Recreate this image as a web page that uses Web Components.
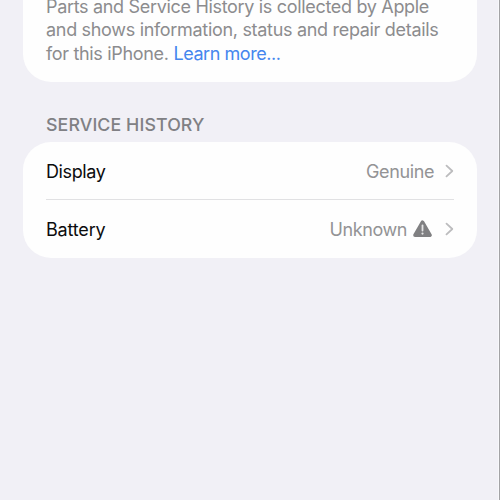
<!DOCTYPE html>
<html lang="en">
<head>
<meta charset="utf-8">
<title>Parts and Service History</title>
<style>
html, body { margin: 0; height: 100%; overflow: hidden; }
body { font-family: Inter, "Liberation Sans", sans-serif; font-size: 18px; background: #f1f0f6; }
</style>
</head>
<body>
<settings-page>
  <info-card>
    <text-line style="height:23px"><fit-text width="383">Parts and Service History is collected by Apple</fit-text></text-line>
    <text-line><fit-text width="392.5">and shows information, status and repair details</fit-text></text-line>
    <text-line><fit-text width="122.5">for this iPhone.</fit-text><fit-text class="link" width="107" style="color:#4586ee">Learn more...</fit-text></text-line>
  </info-card>
  <section-title><fit-text width="158.5">SERVICE HISTORY</fit-text></section-title>
  <settings-group>
    <settings-row><fit-text slot="label" width="59.5">Display</fit-text><fit-text width="68">Genuine</fit-text></settings-row>
    <settings-row><fit-text slot="label" width="59.5">Battery</fit-text><fit-text width="77.5">Unknown</fit-text><warning-icon></warning-icon></settings-row>
  </settings-group>
</settings-page>
<script>
const define = (name, html, setup) => {
  const template = document.createElement('template');
  template.innerHTML = html;
  customElements.define(name, class extends HTMLElement {
    constructor() {
      super();
      this.attachShadow({ mode: 'open' }).append(template.content.cloneNode(true));
    }
    connectedCallback() { if (setup) setup(this); }
  });
};

define('settings-page', `<style>
  :host { display: flex; flex-direction: column; box-sizing: border-box; width: 500px; height: 500px;
    padding: 0 22px 0 23px; background: #f1f0f6; border-right: 1px solid #a3a3a6; box-shadow: inset -1px 0 #f8f8fb; overflow: hidden; }
</style><slot></slot>`);

define('info-card', `<style>
  :host { display: flex; flex-direction: column; box-sizing: border-box; height: 82px; flex: none;
    padding: 0 23px 16px; justify-content: flex-end;
    background: #fefefe; border-radius: 0 0 28px 28px; color: #8c8c8e; }
</style><slot></slot>`);

define('text-line', `<style>
  :host { display: flex; gap: 5px; height: 24px; line-height: 24px; flex: none; }
</style><slot></slot>`);

define('section-title', `<style>
  :host { display: flex; align-items: center; height: 24px; flex: none; margin: 30px 23px 6px; color: #808084; font-size: 17.8px; font-weight: 500; }
</style><slot></slot>`);

define('settings-group', `<style>
  :host { display: flex; flex-direction: column; height: 116px; flex: none; padding: 0 23px; box-sizing: border-box;
    background: #fefefe; border-radius: 28px; }
  ::slotted(:not(:first-child)) { box-shadow: 0 -1px #e1e1e3; }
</style><slot></slot>`);

define('settings-row', `<style>
  :host { display: flex; align-items: center; height: 58px; color: #939395; }
  .label { flex: 1; color: #0c0c0d; }
  .value { display: flex; align-items: center; gap: 6px; }
  svg { width: 9px; height: 14px; margin-left: 11px; }
</style>
<span class="label"><slot name="label"></slot></span>
<span class="value"><slot></slot></span>
<svg viewBox="0 0 9 14"><path d="M1.5 1.6 7.3 7 1.5 12.4" fill="none" stroke="#bcbcbe" stroke-width="1.8" stroke-linecap="round" stroke-linejoin="round"/></svg>`);

define('warning-icon', `<style>
  :host { display: block; width: 19px; height: 18px; margin-right: 2px; }
  svg { display: block; }
</style>
<svg width="19" height="18" viewBox="0 0 19 18"><path d="M9.5 2.2 17 15.2H2Z" fill="#808082" stroke="#808082" stroke-width="3.6" stroke-linejoin="round"/><path d="M9.5 5.4v5.2" stroke="#e4e4e5" stroke-width="1.8" stroke-linecap="round"/><circle cx="9.5" cy="13.6" r="1.1" fill="#e4e4e5"/></svg>`);

// Tracks its text so that the line spans the given width.
define('fit-text', `<style>
  :host { display: inline-block; white-space: nowrap; flex: none; }
  span { display: inline-block; }
</style><span><slot></slot></span>`, el => {
  const span = el.shadowRoot.querySelector('span');
  const width = parseFloat(el.getAttribute('width'));
  const count = el.textContent.length;
  span.style.letterSpacing = (width - span.getBoundingClientRect().width) / count + 'px';
  el.style.width = width + 'px';
});
</script>
</body>
</html>
